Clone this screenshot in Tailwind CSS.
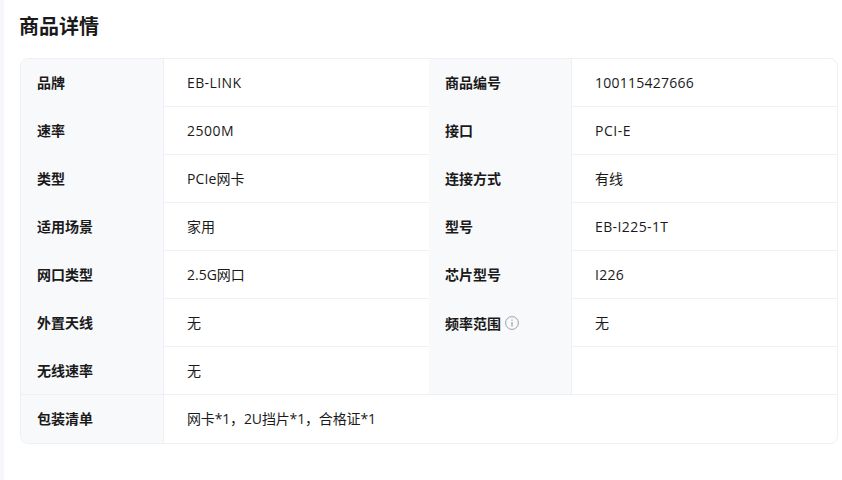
<!DOCTYPE html>
<html lang="zh-CN">
<head>
  <meta charset="UTF-8">
  <title>商品详情</title>
  <script src="https://cdn.jsdelivr.net/npm/@tailwindcss/browser@4"></script>
</head>
<body class="bg-white">
  <div class="h-[480px] w-[842px] overflow-hidden border-l-4 border-[#f5f7fa] pl-4 pr-1 font-['Open_Sans','Noto_Sans_CJK_SC',sans-serif] text-sm text-[#1a1a1a]">
    <h2 class="-ml-px h-[58px] pt-3 text-xl leading-[30px] font-bold">商品详情</h2>
    <!-- 参数表 -->
    <div class="grid w-[818px] grid-cols-[143px_265px_143px_1fr] overflow-hidden rounded-lg border border-[#eef0f3] leading-[47px]">
      <div class="h-12 border-r border-[#eef0f3] bg-[#f8f9fb] pl-4 font-bold">品牌</div>
      <div class="h-12 border-b border-[#eef0f3] pl-[23px] tracking-[0.4px]">EB-LINK</div>
      <div class="h-12 border-r border-[#eef0f3] bg-[#f8f9fb] pl-4 font-bold">商品编号</div>
      <div class="h-12 border-b border-[#eef0f3] pl-[23px] tracking-[0.25px]">100115427666</div>

      <div class="h-12 border-r border-[#eef0f3] bg-[#f8f9fb] pl-4 font-bold">速率</div>
      <div class="h-12 border-b border-[#eef0f3] pl-[23px] tracking-[0.5px]">2500M</div>
      <div class="h-12 border-r border-[#eef0f3] bg-[#f8f9fb] pl-4 font-bold">接口</div>
      <div class="h-12 border-b border-[#eef0f3] pl-[23px] tracking-[0.5px]">PCI-E</div>

      <div class="h-12 border-r border-[#eef0f3] bg-[#f8f9fb] pl-4 font-bold">类型</div>
      <div class="h-12 border-b border-[#eef0f3] pl-[23px] tracking-[0.1px]">PCIe网卡</div>
      <div class="h-12 border-r border-[#eef0f3] bg-[#f8f9fb] pl-4 font-bold">连接方式</div>
      <div class="h-12 border-b border-[#eef0f3] pl-[23px]">有线</div>

      <div class="h-12 border-r border-[#eef0f3] bg-[#f8f9fb] pl-4 font-bold">适用场景</div>
      <div class="h-12 border-b border-[#eef0f3] pl-[23px]">家用</div>
      <div class="h-12 border-r border-[#eef0f3] bg-[#f8f9fb] pl-4 font-bold">型号</div>
      <div class="h-12 border-b border-[#eef0f3] pl-[23px] tracking-[0.4px]">EB-I225-1T</div>

      <div class="h-12 border-r border-[#eef0f3] bg-[#f8f9fb] pl-4 font-bold">网口类型</div>
      <div class="h-12 border-b border-[#eef0f3] pl-[23px]">2.5G网口</div>
      <div class="h-12 border-r border-[#eef0f3] bg-[#f8f9fb] pl-4 font-bold">芯片型号</div>
      <div class="h-12 border-b border-[#eef0f3] pl-[23px] tracking-[0.25px]">I226</div>

      <div class="h-12 border-r border-[#eef0f3] bg-[#f8f9fb] pl-4 font-bold">外置天线</div>
      <div class="h-12 border-b border-[#eef0f3] pl-[23px]">无</div>
      <div class="flex h-12 items-center gap-1 border-r border-[#eef0f3] bg-[#f8f9fb] pl-4 font-bold">
        <span>频率范围</span>
        <svg class="h-[14px] w-[14px] text-[#9aa0aa]" viewBox="0 0 14 14" fill="none" stroke="currentColor">
          <circle cx="7" cy="7" r="6.4" />
          <path d="M7 6v4.5" stroke-width="1.2" />
          <path d="M7 3.4v1.3" stroke-width="1.2" />
        </svg>
      </div>
      <div class="h-12 border-b border-[#eef0f3] pl-[23px]">无</div>

      <div class="h-12 border-r border-b border-[#eef0f3] bg-[#f8f9fb] pl-4 font-bold">无线速率</div>
      <div class="h-12 border-b border-[#eef0f3] pl-[23px]">无</div>
      <div class="h-12 border-r border-b border-[#eef0f3] bg-[#f8f9fb]"></div>
      <div class="h-12 border-b border-[#eef0f3]"></div>

      <div class="h-12 border-r border-[#eef0f3] bg-[#f8f9fb] pl-4 font-bold">包装清单</div>
      <div class="col-span-3 h-12 pl-[23px] tracking-[-0.15px]">网卡*1，2U挡片*1，合格证*1</div>
    </div>
  </div>
</body>
</html>
